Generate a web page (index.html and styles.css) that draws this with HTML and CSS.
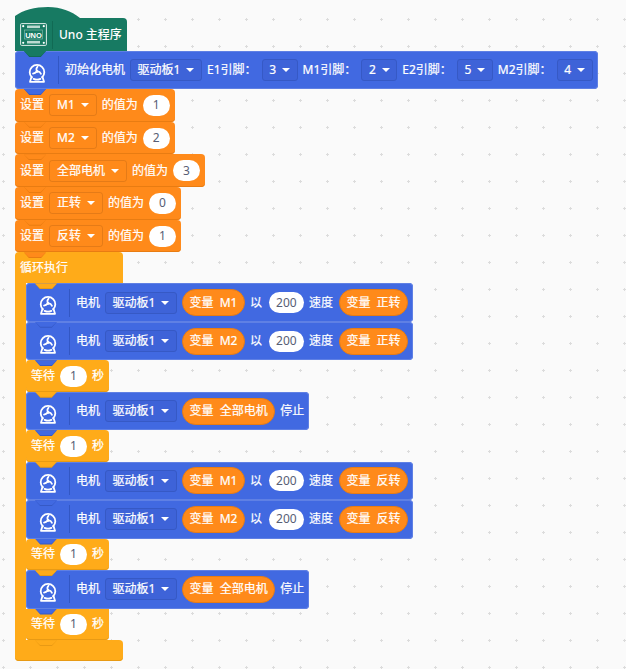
FILE: index.html
```html
<!DOCTYPE html>
<html lang="zh">
<head>
<meta charset="utf-8">
<title>Uno 主程序</title>
<link rel="stylesheet" href="styles.css">
</head>
<body>
<svg class="defs" width="0" height="0" aria-hidden="true">
  <symbol id="motor" viewBox="0 0 18 20">
    <g fill="none" stroke="#fff" stroke-width="1.8" stroke-linecap="round" stroke-linejoin="round">
      <path d="M3.9 14.4A7.3 7.3 0 1 1 14.1 14.4"/>
      <path d="M3.6 13.6 2 18.8H16L14.4 13.6"/>
      <path d="M5.6 15.9C7.6 16.8 10.4 16.8 12.4 15.9"/>
    </g>
    <g fill="none" stroke="#fff" stroke-width="1.7" stroke-linecap="round">
      <path d="M9 8.4C8.2 6.8 8 5 9.6 3.6"/>
      <path d="M9 8.4C10.8 8.2 12.2 9 13 10.8"/>
      <path d="M9 8.4C7.8 9.6 6.6 10.4 5 10.6"/>
    </g>
    <circle cx="9" cy="8.4" r="1.4" fill="#fff"/>
  </symbol>
</svg>

<main class="script">
  <svg class="hat-dome" width="65" height="11" viewBox="0 0 65 11"><path d="M0 11V9C8 3 20 0 33 0C46 0 56 4 65 11Z"/></svg>
  <section class="block hat">
    <span class="icon-cell board-cell">
      <svg width="27" height="23" viewBox="0 0 27 23">
        <rect x=".6" y=".6" width="25.8" height="21.8" rx="1" fill="none" stroke="#dfeee9" stroke-width="1"/>
        <rect x="7" y="2.5" width="13" height="2.6" fill="#e6f2ee" opacity=".8"/>
        <rect x="7" y="17.9" width="13" height="2.6" fill="#e6f2ee" opacity=".8"/>
        <circle cx="3.2" cy="3.2" r="1.1" fill="#fff"/><circle cx="23.8" cy="3.2" r="1.1" fill="#fff"/>
        <circle cx="3.2" cy="19.8" r="1.1" fill="#fff"/><circle cx="23.8" cy="19.8" r="1.1" fill="#fff"/>
        <rect x="4.5" y="7" width="18" height="9" fill="none" stroke="#7fb8a8" stroke-width=".7"/>
        <text class="board-text" x="13.5" y="14.6" text-anchor="middle">UNO</text>
      </svg>
    </span>
    <span class="label strong">Uno 主程序</span>
  </section>

  <section class="block motor init">
    <span class="icon-cell"><svg class="motor-icon" width="18" height="20"><use href="#motor"/></svg></span>
    <span class="label">初始化电机</span>
    <span class="drop wide">驱动板1<i></i></span>
    <span class="label">E1引脚：</span>
    <span class="drop pin">3<i></i></span>
    <span class="label">M1引脚：</span>
    <span class="drop pin">2<i></i></span>
    <span class="label">E2引脚：</span>
    <span class="drop pin">5<i></i></span>
    <span class="label">M2引脚：</span>
    <span class="drop pin">4<i></i></span>
  </section>

  <section class="block setter"><span class="label">设置</span><span class="drop">M1<i></i></span><span class="label">的值为</span><span class="num">1</span></section>
  <section class="block setter"><span class="label">设置</span><span class="drop">M2<i></i></span><span class="label">的值为</span><span class="num">2</span></section>
  <section class="block setter"><span class="label">设置</span><span class="drop">全部电机<i></i></span><span class="label">的值为</span><span class="num">3</span></section>
  <section class="block setter"><span class="label">设置</span><span class="drop">正转<i></i></span><span class="label">的值为</span><span class="num">0</span></section>
  <section class="block setter"><span class="label">设置</span><span class="drop">反转<i></i></span><span class="label">的值为</span><span class="num">1</span></section>

  <section class="loop">
    <div class="block loop-head"><span class="label">循环执行</span></div>
    <div class="loop-body">
      <div class="block motor">
        <span class="icon-cell"><svg class="motor-icon" width="18" height="20"><use href="#motor"/></svg></span>
        <span class="label">电机</span><span class="drop wide">驱动板1<i></i></span>
        <span class="var">变量 M1</span><span class="label">以</span><span class="num speed">200</span><span class="label">速度</span><span class="var">变量 正转</span>
      </div>
      <div class="block motor">
        <span class="icon-cell"><svg class="motor-icon" width="18" height="20"><use href="#motor"/></svg></span>
        <span class="label">电机</span><span class="drop wide">驱动板1<i></i></span>
        <span class="var">变量 M2</span><span class="label">以</span><span class="num speed">200</span><span class="label">速度</span><span class="var">变量 正转</span>
      </div>
      <div class="block wait"><span class="label">等待</span><span class="num">1</span><span class="label">秒</span></div>
      <div class="block motor">
        <span class="icon-cell"><svg class="motor-icon" width="18" height="20"><use href="#motor"/></svg></span>
        <span class="label">电机</span><span class="drop wide">驱动板1<i></i></span>
        <span class="var">变量 全部电机</span><span class="label">停止</span>
      </div>
      <div class="block wait"><span class="label">等待</span><span class="num">1</span><span class="label">秒</span></div>
      <div class="block motor">
        <span class="icon-cell"><svg class="motor-icon" width="18" height="20"><use href="#motor"/></svg></span>
        <span class="label">电机</span><span class="drop wide">驱动板1<i></i></span>
        <span class="var">变量 M1</span><span class="label">以</span><span class="num speed">200</span><span class="label">速度</span><span class="var">变量 反转</span>
      </div>
      <div class="block motor">
        <span class="icon-cell"><svg class="motor-icon" width="18" height="20"><use href="#motor"/></svg></span>
        <span class="label">电机</span><span class="drop wide">驱动板1<i></i></span>
        <span class="var">变量 M2</span><span class="label">以</span><span class="num speed">200</span><span class="label">速度</span><span class="var">变量 反转</span>
      </div>
      <div class="block wait"><span class="label">等待</span><span class="num">1</span><span class="label">秒</span></div>
      <div class="block motor">
        <span class="icon-cell"><svg class="motor-icon" width="18" height="20"><use href="#motor"/></svg></span>
        <span class="label">电机</span><span class="drop wide">驱动板1<i></i></span>
        <span class="var">变量 全部电机</span><span class="label">停止</span>
      </div>
      <div class="block wait last"><span class="label">等待</span><span class="num">1</span><span class="label">秒</span></div>
    </div>
    <div class="loop-foot"></div>
  </section>
</main>
</body>
</html>
```
FILE: styles.css
```css
* { box-sizing: border-box; }
html, body { margin: 0; height: 100%; }
body {
  overflow: hidden;
  background-color: #fafafa;
  background-image: radial-gradient(circle at 3.5px 19.5px, #dcdcdc 0, #dcdcdc 1px, transparent 1.3px);
  background-size: 27px 27px;
  font-family: "Noto Sans", "Noto Sans CJK SC", sans-serif;
  font-size: 12px;
  color: #fff;
  -webkit-text-stroke: .2px #fff;
}
.defs { position: absolute; }
.script { display: flex; flex-direction: column; align-items: flex-start; padding: 7px 0 0 15px; }
.hat-dome { display: block; fill: #177a62; }

.block {
  position: relative;
  display: flex;
  align-items: center;
  gap: 5px;
  width: fit-content;
  border-radius: 4px;
  line-height: 16px;
  white-space: nowrap;
}
.block::before,
.block::after {
  content: "";
  position: absolute;
  z-index: 1;
  top: 100%;
  left: 9px;
  width: 22px;
  height: 5px;
  clip-path: polygon(0 0, 100% 0, 76% 100%, 24% 100%);
}
.block::before { height: 6px; background: var(--edge-solid); }
.block::after { background: inherit; }

.hat { height: 33px; width: 112px; background: #177a62; border-radius: 0 4px 0 0; gap: 6px; --edge-solid: #126a54; }
.motor { height: 38.4px; padding-right: 5px; background: #4169e1; box-shadow: inset 0 0 0 1px #5f80e4; --edge-solid: #3659c5; }
.init { height: 38px; width: 583px; }
.setter { height: 32.7px; padding: 0 5px; background: #ff8a1a; box-shadow: inset 0 -1px 0 #e87c12; --edge-solid: #e87c12; }
.wait { height: 31.6px; padding: 0 5px; background: #ffab19; box-shadow: inset 0 -1px 0 #e89a14; --edge-solid: #e89a14; }

.icon-cell {
  display: flex;
  align-items: center;
  justify-content: center;
  width: 44px;
  height: 28px;
  margin-right: 1px;
  border-right: 1px solid #3257c4;
  padding-top: 5px;
}
.board-cell { width: 38px; margin-right: 0; border-right-color: #116a54; padding: 0; }
.board-text { font: 700 7.5px "Liberation Sans", sans-serif; fill: #fff; stroke: none; }
.label { flex: none; }
.strong { font-weight: 500; -webkit-text-stroke: 0; }

.drop {
  display: inline-flex;
  align-items: center;
  justify-content: center;
  gap: 6px;
  height: 22px;
  padding: 0 7px;
  border: 1px solid rgba(0, 0, 0, .1);
  border-radius: 3px;
}
.motor .drop { background: #3e63d8; border-color: #3659c5; }
.drop i {
  width: 0;
  height: 0;
  border-left: 4px solid transparent;
  border-right: 4px solid transparent;
  border-top: 4px solid #fff;
}
.wide { width: 72px; }
.pin { width: 36px; }

.num {
  display: inline-flex;
  align-items: center;
  justify-content: center;
  width: 27px;
  height: 21px;
  border-radius: 11px;
  background: #fff;
  color: #575e75;
  -webkit-text-stroke: 0;
}
.speed { width: 35px; margin-left: 2px; }
.speed + .label { margin-right: 1px; }

.var {
  display: inline-flex;
  align-items: center;
  height: 27px;
  padding: 0 6.5px;
  border: 1px solid #e87c12;
  border-radius: 14px;
  background: #ff8a1a;
  word-spacing: 3px;
}

.loop { display: flex; flex-direction: column; align-items: flex-start; }
.loop-head { height: 31px; width: 108px; padding-left: 5px; background: #ffab19; border-radius: 4px 4px 0 0; --edge-solid: #e89a14; }
.loop-head::before,
.loop-head::after { left: 20px; }
.loop-body { display: flex; flex-direction: column; align-items: flex-start; border-left: 11px solid #ffab19; }
.last { border-radius: 0 0 4px 4px; }
.loop-foot { width: 108px; height: 21px; background: #ffab19; border-radius: 0 4px 4px 4px; box-shadow: inset 0 -1px 0 #e89a14; }
```
